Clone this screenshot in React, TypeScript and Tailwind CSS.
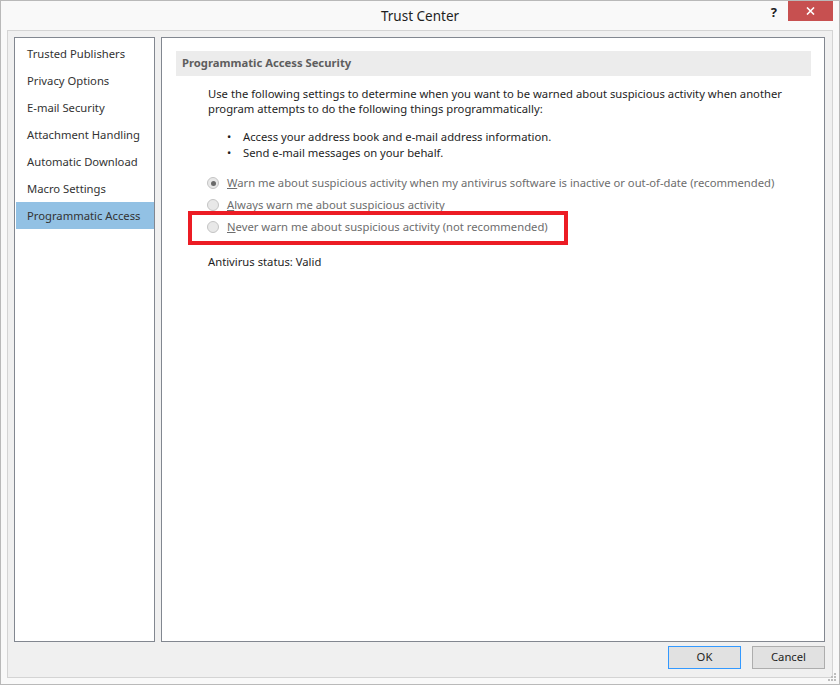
import React from "react";

const navItems = [
  "Trusted Publishers",
  "Privacy Options",
  "E-mail Security",
  "Attachment Handling",
  "Automatic Download",
  "Macro Settings",
  "Programmatic Access",
];

function Radio({ checked, label }: { checked?: boolean; label: React.ReactNode }) {
  return (
    <div className="h-[22px] flex items-center">
      <div className="w-[12px] h-[12px] rounded-full border border-[#c4c4c4] bg-[#e8e8e8] flex items-center justify-center shrink-0">
        {checked && <div className="w-[5px] h-[5px] rounded-full bg-[#6a6a6a]" />}
      </div>
      <span className="ml-[8px] text-[#6d6d6d]">{label}</span>
    </div>
  );
}

export default function App() {
  return (
    <div
      className="w-[840px] h-[685px] bg-[#f9f9f9] border border-[#b9b9b9] flex flex-col relative overflow-hidden text-[11.25px] text-[#1e1e1e]"
      style={{ fontFamily: '"Noto Sans", "Open Sans", sans-serif' }}
    >
      {/* Title bar */}
      <div className="h-[29px] relative flex items-center justify-center shrink-0">
        <span className="text-[13.5px] text-[#1f1f1f] mt-[1px]">Trust Center</span>
        <span className="absolute right-[62px] top-[2px] text-[13px] font-bold text-[#202020]">?</span>
        <div className="absolute right-[6px] top-0 w-[45px] h-[20px] bg-[#c75050] flex items-center justify-center">
          <svg width="9" height="8" viewBox="0 0 9 8">
            <path d="M1 0.5 L8 7.5 M8 0.5 L1 7.5" stroke="#ffffff" strokeWidth="1.6" />
          </svg>
        </div>
      </div>

      {/* Client frame */}
      <div className="flex-1 mx-[6px] mb-[6px] border border-[#d4d4d4] bg-[#f0f0f0] flex flex-col pt-[6px] pl-[6px] pr-[7px] relative">
        <div className="flex gap-[6px] h-[605px]">
          {/* Left nav */}
          <div className="w-[141px] border border-[#828790] bg-white pt-[2px] pl-[1px]">
            {navItems.map((n) => (
              <div
                key={n}
                className={
                  "h-[27px] flex items-center pl-[11px] pt-[2px] text-[#333333] " +
                  (n === "Programmatic Access" ? "bg-[#92c1e4]" : "")
                }
              >
                {n}
              </div>
            ))}
          </div>

          {/* Right panel */}
          <div className="flex-1 border border-[#828790] bg-white relative pt-[13px] pl-[14px] pr-[13px]">
            <div className="h-[25px] bg-[#ececec] flex items-center pl-[6px] font-bold text-[#5e5e5e]">
              Programmatic Access Security
            </div>
            <div className="pl-[32px]">
              <div className="mt-[10px] leading-[15px] whitespace-nowrap">
                Use the following settings to determine when you want to be warned about suspicious activity when another
                <br />
                program attempts to do the following things programmatically:
              </div>
              <div className="mt-[13px] leading-[16px]">
                <div className="flex">
                  <span className="w-[35px] pl-[19px]">•</span>
                  <span>Access your address book and e-mail address information.</span>
                </div>
                <div className="flex">
                  <span className="w-[35px] pl-[19px]">•</span>
                  <span>Send e-mail messages on your behalf.</span>
                </div>
              </div>
              <div className="mt-[11px] -ml-[1px] whitespace-nowrap">
                <Radio
                  checked
                  label={
                    <>
                      <span className="underline">W</span>arn me about suspicious activity when my antivirus software is inactive or out-of-date (recommended)
                    </>
                  }
                />
                <Radio
                  label={
                    <>
                      <span className="underline">A</span>lways warn me about suspicious activity
                    </>
                  }
                />
                <Radio
                  label={
                    <>
                      <span className="underline">N</span>ever warn me about suspicious activity (not recommended)
                    </>
                  }
                />
              </div>
              <div className="mt-[16px] leading-[16px]">Antivirus status: Valid</div>
            </div>

            {/* Red highlight annotation */}
            <div className="absolute left-[26px] top-[173px] w-[380px] h-[34px] border-[4px] border-[#ec1c24]" />
          </div>
        </div>

        {/* Buttons */}
        <div className="mt-[4px] flex justify-end gap-[11px]">
          <div className="w-[73px] h-[23px] border border-[#3399ff] bg-[#e1e1e1] flex items-center justify-center text-[#1e1e1e]">
            OK
          </div>
          <div className="w-[73px] h-[23px] border border-[#adadad] bg-[#e1e1e1] flex items-center justify-center text-[#1e1e1e]">
            Cancel
          </div>
        </div>

        {/* Resize grip */}
        <svg className="absolute right-[-5px] bottom-[-5px]" width="10" height="10" viewBox="0 0 10 10">
          <rect x="7" y="1" width="2" height="2" fill="#bdbdbd" />
          <rect x="4" y="4" width="2" height="2" fill="#bdbdbd" />
          <rect x="7" y="4" width="2" height="2" fill="#bdbdbd" />
          <rect x="1" y="7" width="2" height="2" fill="#bdbdbd" />
          <rect x="4" y="7" width="2" height="2" fill="#bdbdbd" />
          <rect x="7" y="7" width="2" height="2" fill="#bdbdbd" />
        </svg>
      </div>
    </div>
  );
}
